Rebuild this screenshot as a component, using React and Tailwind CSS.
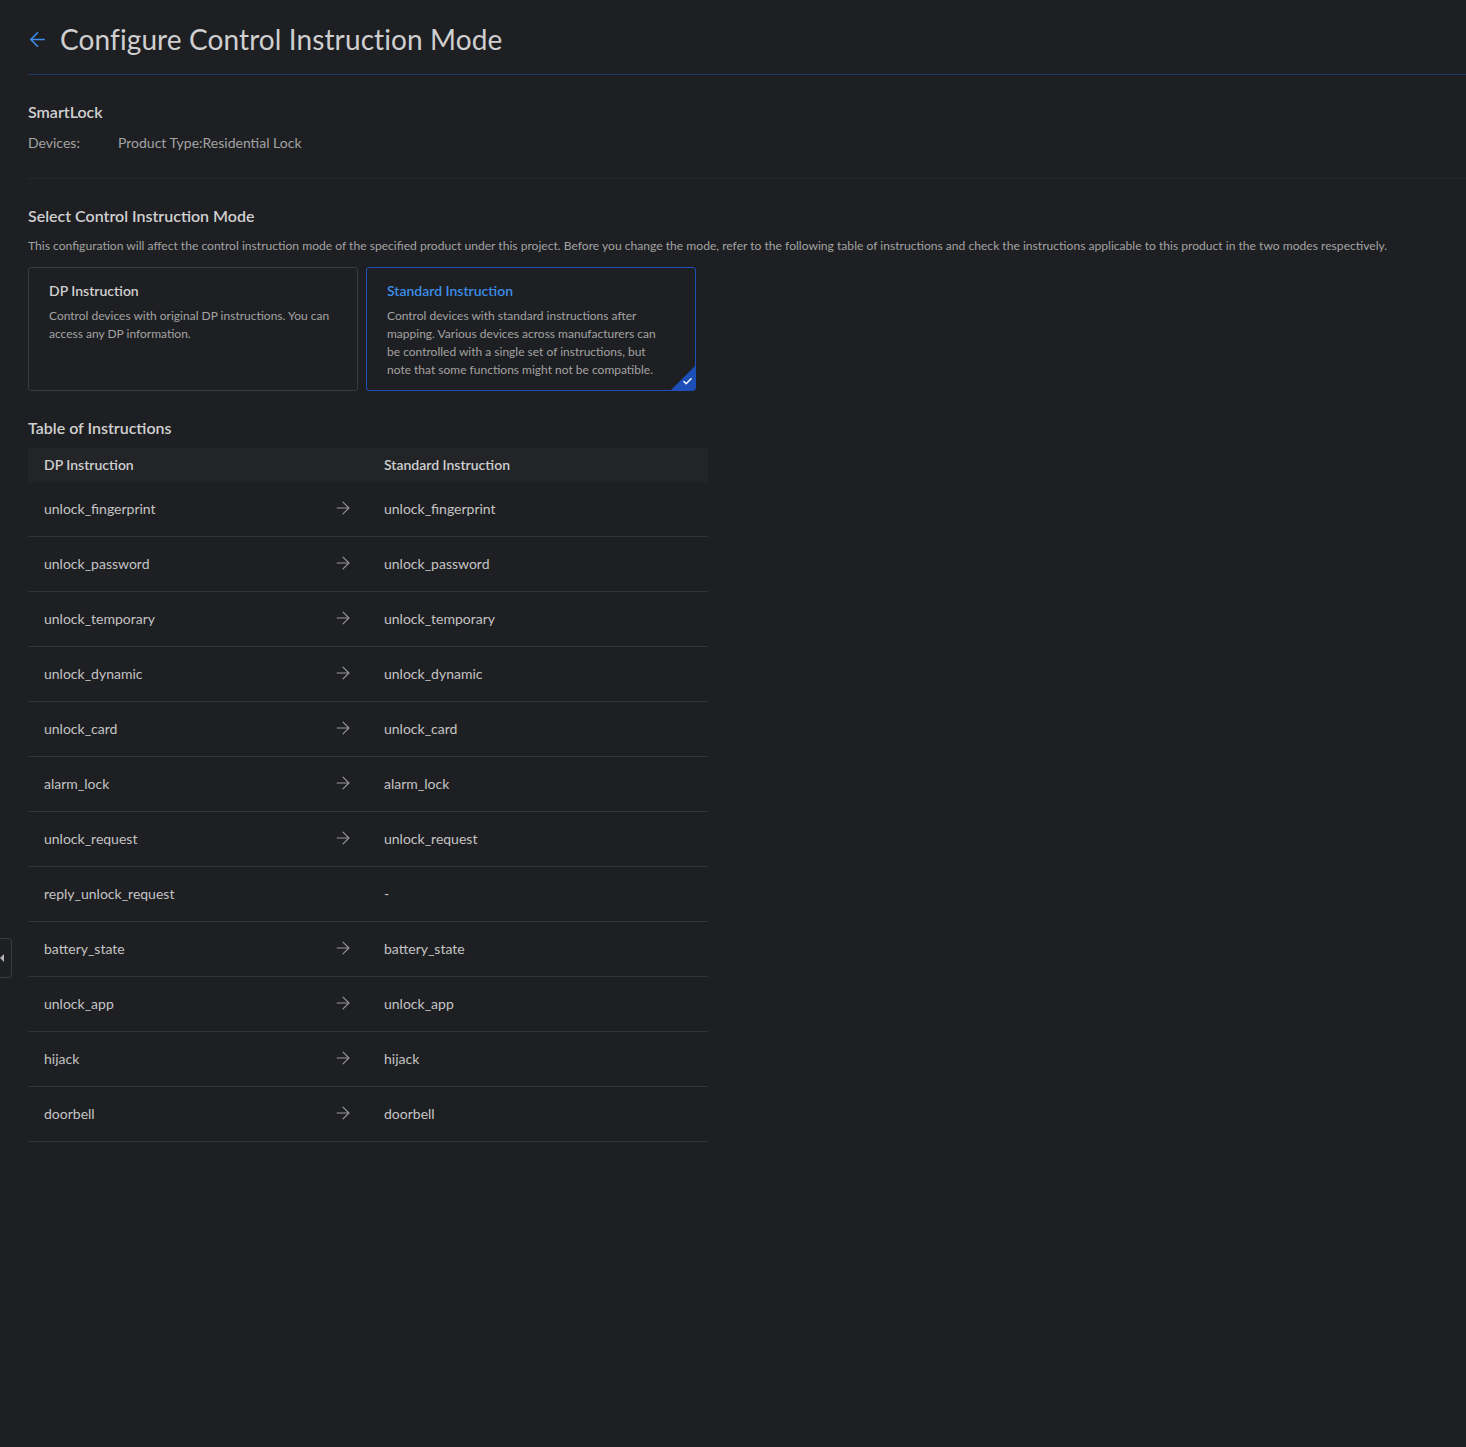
import { ArrowLeft, ArrowRight, Check } from 'lucide-react';

const rows = [
  ['unlock_fingerprint', 'unlock_fingerprint'],
  ['unlock_password', 'unlock_password'],
  ['unlock_temporary', 'unlock_temporary'],
  ['unlock_dynamic', 'unlock_dynamic'],
  ['unlock_card', 'unlock_card'],
  ['alarm_lock', 'alarm_lock'],
  ['unlock_request', 'unlock_request'],
  ['reply_unlock_request', null],
  ['battery_state', 'battery_state'],
  ['unlock_app', 'unlock_app'],
  ['hijack', 'hijack'],
  ['doorbell', 'doorbell'],
];

const App = () => {
  return (
    <div className="relative min-h-[1447px] bg-[#1e1f22] text-[#c9c9c9] pl-7" style={{ fontFamily: 'Lato, "Noto Sans", sans-serif' }}>
      {/* collapse handle */}
      <div className="absolute left-0 top-[938px] w-[12px] h-[40px] border border-l-0 border-[#3a3b3e] rounded-r-[4px] flex items-center">
        <span className="w-0 h-0 border-y-[4px] border-y-transparent border-r-[4px] border-r-[#b5b5b5]" />
      </div>

      {/* header */}
      <div className="flex items-center gap-[11px] h-[75px] pt-1 border-b border-[#1f3a66]">
        <ArrowLeft size={23} strokeWidth={1.7} className="text-[#3b8ee8] -ml-[2px]" />
        <h1 className="text-[28px] text-[#cfcfcf] tracking-[0.1px]">Configure Control Instruction Mode</h1>
      </div>

      {/* product info */}
      <div className="pt-[27px] pb-[25px] border-b border-[#27282b]">
        <div className="text-[16px] font-semibold text-[#d0d0d0] leading-5">SmartLock</div>
        <div className="flex text-[14px] text-[#a3a3a3] mt-[11px] leading-5">
          <span className="w-[90px]">Devices:</span>
          <span>Product Type:Residential Lock</span>
        </div>
      </div>

      {/* mode select */}
      <div className="pt-[27px]">
        <div className="text-[16px] font-semibold text-[#d0d0d0] leading-5">Select Control Instruction Mode</div>
        <p className="text-[12.1px] text-[#a3a3a3] mt-[12px] leading-4">
          This configuration will affect the control instruction mode of the specified product under this project. Before you change the mode, refer to the following table of instructions and check the instructions applicable to this product in the two modes respectively.
        </p>
        <div className="flex gap-[8px] mt-[13px]">
          <div className="w-[330px] h-[124px] border border-[#3a3b3e] rounded-[3px] px-5 pt-[13px]">
            <div className="text-[14px] font-semibold text-[#d0d0d0] leading-5">DP Instruction</div>
            <p className="text-[12px] text-[#a3a3a3] leading-[18px] mt-[6px]">Control devices with original DP instructions. You can access any DP information.</p>
          </div>
          <div className="relative w-[330px] h-[124px] border border-[#1c4fb8] rounded-[3px] px-5 pt-[13px] overflow-hidden">
            <div className="text-[14px] font-semibold text-[#3b8ee8] leading-5">Standard Instruction</div>
            <p className="text-[12px] text-[#a3a3a3] leading-[18px] mt-[6px] pr-[14px]">Control devices with standard instructions after mapping. Various devices across manufacturers can be controlled with a single set of instructions, but note that some functions might not be compatible.</p>
            <div className="absolute right-0 bottom-0 w-0 h-0 border-l-[24px] border-l-transparent border-b-[24px] border-b-[#1c4fb8]" />
            <Check size={11} strokeWidth={3} className="absolute right-[2px] bottom-[3px] text-white" />
          </div>
        </div>
      </div>

      {/* table */}
      <div className="pt-[27px]">
        <div className="text-[16px] font-semibold text-[#d0d0d0] leading-5">Table of Instructions</div>
        <div className="w-[680px] mt-[10px] text-[14px]">
          <div className="flex items-center h-[34px] pb-[2px] bg-[#232427] font-semibold text-[#cfcfcf]">
            <div className="w-[340px] pl-4">DP Instruction</div>
            <div className="pl-4">Standard Instruction</div>
          </div>
          {rows.map(([dp, std]) => (
            <div key={dp} className="flex items-center h-[55px] pb-[2px] border-b border-[#333437] text-[#c4c4c4]">
              <div className="w-[340px] pl-4 flex items-center justify-between pr-[15px]">
                <span>{dp}</span>
                {std && <ArrowRight size={20} strokeWidth={1.3} className="text-[#9a9a9a]" />}
              </div>
              <div className="pl-4">{std || '-'}</div>
            </div>
          ))}
        </div>
      </div>
    </div>
  );
};

export default App;
